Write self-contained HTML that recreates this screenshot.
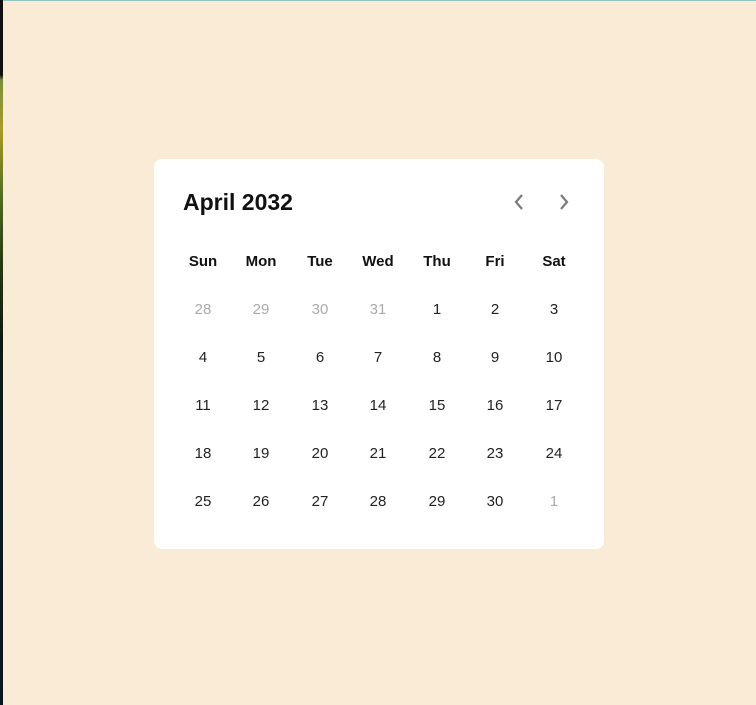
<!DOCTYPE html>
<html><head><style>
html,body{margin:0;padding:0;width:756px;height:705px;overflow:hidden;background:#faebd7;font-family:"Liberation Sans",sans-serif;position:relative}
.l{position:absolute;left:0;top:0;width:3px;height:705px;background:linear-gradient(#111 0,#111 75px,#7a8f3a 80px,#a99a2a 130px,#4f6a1f 200px,#2a3a12 260px,#0e1a10 340px,#0c1a22 500px,#0a1520 705px)}
.t{position:absolute;left:3px;top:0;right:0;height:1px;background:#8fc4c0}
.card{position:absolute;left:154px;top:159px;width:450px;height:390px;background:#fff;border-radius:8px}
.title{position:absolute;left:29px;top:30px;font-size:23px;font-weight:bold;color:#111}
.c{position:absolute;width:50px;text-align:center;font-size:15px;color:#222;transform:translate(-25px,-7px)}
.h{font-weight:bold;color:#111}
.g{color:#aaa}
svg{position:absolute}
</style></head><body>
<div class="l"></div><div class="t"></div>
<div class="card">
<div class="title">April 2032</div>
<svg style="left:358px;top:34px" width="14" height="18" viewBox="0 0 14 18"><path d="M10 2 L4 9 L10 16" fill="none" stroke="#7a7a7a" stroke-width="2.2"/></svg>
<svg style="left:403px;top:34px" width="14" height="18" viewBox="0 0 14 18"><path d="M4 2 L10 9 L4 16" fill="none" stroke="#7a7a7a" stroke-width="2.2"/></svg>
<div id="g"></div>
</div>
<script>
var xs=[49,107,166,224,283,341,400],ys=[101,149,197,245,293,341];
var h=["Sun","Mon","Tue","Wed","Thu","Fri","Sat"];
var d=[28,29,30,31,1,2,3];for(var i=4;i<=30;i++)d.push(i);d.push(1);
var s="";
for(var c=0;c<7;c++)s+='<div class="c h" style="left:'+xs[c]+'px;top:'+ys[0]+'px">'+h[c]+'</div>';
for(var k=0;k<35;k++){var r=Math.floor(k/7)+1,c=k%7;var gr=(k<4||k==34)?' g':'';
s+='<div class="c'+gr+'" style="left:'+xs[c]+'px;top:'+ys[r]+'px">'+d[k]+'</div>';}
document.getElementById("g").innerHTML=s;
</script>
</body></html>
